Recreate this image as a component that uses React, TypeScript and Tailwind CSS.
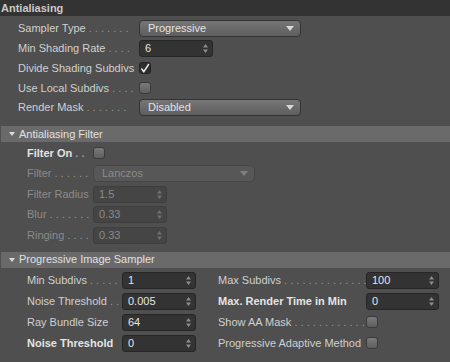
import React from "react";

type FieldProps = { value: string; w: number; disabled?: boolean };

const font = { fontFamily: '"Liberation Sans", Arial, sans-serif' };

function Dropdown({ value, w, disabled }: FieldProps) {
  return (
    <div
      className={`flex h-[17px] items-center justify-between rounded-[4px] border pl-[8px] pr-[6px] ${
        disabled
          ? "border-[#464646] bg-[#575757] text-[#8a8a8a]"
          : "border-[#333] bg-gradient-to-b from-[#767676] to-[#5e5e5e] text-[#e2e2e2]"
      }`}
      style={{ width: w }}
    >
      <span className="text-[11px] leading-none">{value}</span>
      <svg width="8" height="5" viewBox="0 0 8 5">
        <path d="M0 0 H8 L4 5 Z" fill={disabled ? "#808080" : "#d8d8d8"} />
      </svg>
    </div>
  );
}

function NumField({ value, w, disabled }: FieldProps) {
  return (
    <div
      className={`flex h-[17px] items-center justify-between rounded-[3px] border pl-[5px] pr-[4px] ${
        disabled ? "border-[#3e3e3e] bg-[#454545] text-[#8a8a8a]" : "border-[#262626] bg-[#333333] text-[#e6e6e6]"
      }`}
      style={{ width: w }}
    >
      <span className="text-[11px] leading-none">{value}</span>
      <svg width="5" height="9" viewBox="0 0 5 9">
        <path d="M0 3.5 L2.5 0 L5 3.5 Z M0 5.5 L2.5 9 L5 5.5 Z" fill={disabled ? "#707070" : "#8c8c8c"} />
      </svg>
    </div>
  );
}

function Check({ checked }: { checked?: boolean }) {
  return (
    <div
      className={`flex h-[12px] w-[12px] items-center justify-center rounded-[3px] border ${
        checked ? "border-[#222] bg-[#2e2e2e]" : "border-[#3a3a3a] bg-gradient-to-b from-[#7a7a7a] to-[#5e5e5e]"
      }`}
    >
      {checked && (
        <svg width="11" height="11" viewBox="0 0 11 11">
          <path d="M2 6 L4.2 9 L9.5 1" stroke="#f2f2f2" strokeWidth="1.6" fill="none" strokeLinecap="round" />
        </svg>
      )}
    </div>
  );
}

function Label({ text, dots = 0, w, bold, dim }: { text: string; dots?: number; w: number; bold?: boolean; dim?: boolean }) {
  const color = dim ? "text-[#8b8b8b]" : bold ? "text-[#e4e4e4]" : "text-[#d0d0d0]";
  return (
    <span
      className={`shrink-0 overflow-hidden whitespace-nowrap text-[11px] leading-none ${color} ${bold ? "font-bold" : ""}`}
      style={{ width: w }}
    >
      {text}
      {dots > 0 && <span className="text-[#969696]">{" " + Array(dots).fill(".").join(" ")}</span>}
    </span>
  );
}

function SectionBar({ title }: { title: string }) {
  return (
    <div className="ml-[1px] flex h-[16px] items-center bg-[#6a6a6a] pl-[8px]">
      <svg width="6" height="4" viewBox="0 0 6 4" className="mr-[4px]">
        <path d="M0 0 H6 L3 4 Z" fill="#dcdcdc" />
      </svg>
      <span className="text-[11px] leading-none text-[#e0e0e0]">{title}</span>
    </div>
  );
}

export default function App() {
  return (
    <div className="h-[362px] w-[450px] overflow-hidden bg-[#4f4f4f]" style={font}>
      <div className="flex h-[16px] items-center bg-[#333333] pl-[1px]">
        <span className="text-[11px] font-bold leading-none text-[#cacaca]">Antialiasing</span>
      </div>

      <div className="pl-[18px] pt-[2px]">
        <div className="flex h-[20px] items-center">
          <Label text="Sampler Type" dots={7} w={121} />
          <Dropdown value="Progressive" w={162} />
        </div>
        <div className="flex h-[20px] items-center">
          <Label text="Min Shading Rate" dots={4} w={121} />
          <NumField value="6" w={74} />
        </div>
        <div className="flex h-[20px] items-center">
          <Label text="Divide Shading Subdivs" w={121} />
          <Check checked />
        </div>
        <div className="flex h-[20px] items-center">
          <Label text="Use Local Subdivs" dots={4} w={121} />
          <Check />
        </div>
        <div className="flex h-[19px] items-center">
          <Label text="Render Mask" dots={7} w={121} />
          <Dropdown value="Disabled" w={162} />
        </div>
      </div>

      <div className="mt-[9px]">
        <SectionBar title="Antialiasing Filter" />
        <div className="pl-[27px] pt-[1px]">
          <div className="flex h-[20.5px] items-center">
            <Label text="Filter On" dots={2} w={66} bold />
            <Check />
          </div>
          <div className="flex h-[20.5px] items-center">
            <Label text="Filter" dots={6} w={66} dim />
            <Dropdown value="Lanczos" w={162} disabled />
          </div>
          <div className="flex h-[20.5px] items-center">
            <Label text="Filter Radius" w={66} dim />
            <NumField value="1.5" w={74} disabled />
          </div>
          <div className="flex h-[20.5px] items-center">
            <Label text="Blur" dots={7} w={66} dim />
            <NumField value="0.33" w={74} disabled />
          </div>
          <div className="flex h-[20.5px] items-center">
            <Label text="Ringing" dots={4} w={66} dim />
            <NumField value="0.33" w={74} disabled />
          </div>
        </div>
      </div>

      <div className="mt-[6px]">
        <SectionBar title="Progressive Image Sampler" />
        <div className="grid grid-cols-[218px_1fr] pt-[2px]">
          <div className="pl-[27px]">
            <div className="flex h-[21px] items-center">
              <Label text="Min Subdivs" dots={5} w={95} />
              <NumField value="1" w={74} />
            </div>
            <div className="flex h-[21px] items-center">
              <Label text="Noise Threshold" dots={2} w={95} />
              <NumField value="0.005" w={74} />
            </div>
            <div className="flex h-[21px] items-center">
              <Label text="Ray Bundle Size" w={95} />
              <NumField value="64" w={74} />
            </div>
            <div className="flex h-[21px] items-center">
              <Label text="Noise Threshold" w={95} bold />
              <NumField value="0" w={74} />
            </div>
          </div>
          <div>
            <div className="flex h-[21px] items-center">
              <Label text="Max Subdivs" dots={14} w={148} />
              <NumField value="100" w={73} />
            </div>
            <div className="flex h-[21px] items-center">
              <Label text="Max. Render Time in Min" w={148} bold />
              <NumField value="0" w={73} />
            </div>
            <div className="flex h-[21px] items-center">
              <Label text="Show AA Mask" dots={12} w={148} />
              <Check />
            </div>
            <div className="flex h-[21px] items-center">
              <Label text="Progressive Adaptive Method" w={148} />
              <Check />
            </div>
          </div>
        </div>
      </div>
    </div>
  );
}
